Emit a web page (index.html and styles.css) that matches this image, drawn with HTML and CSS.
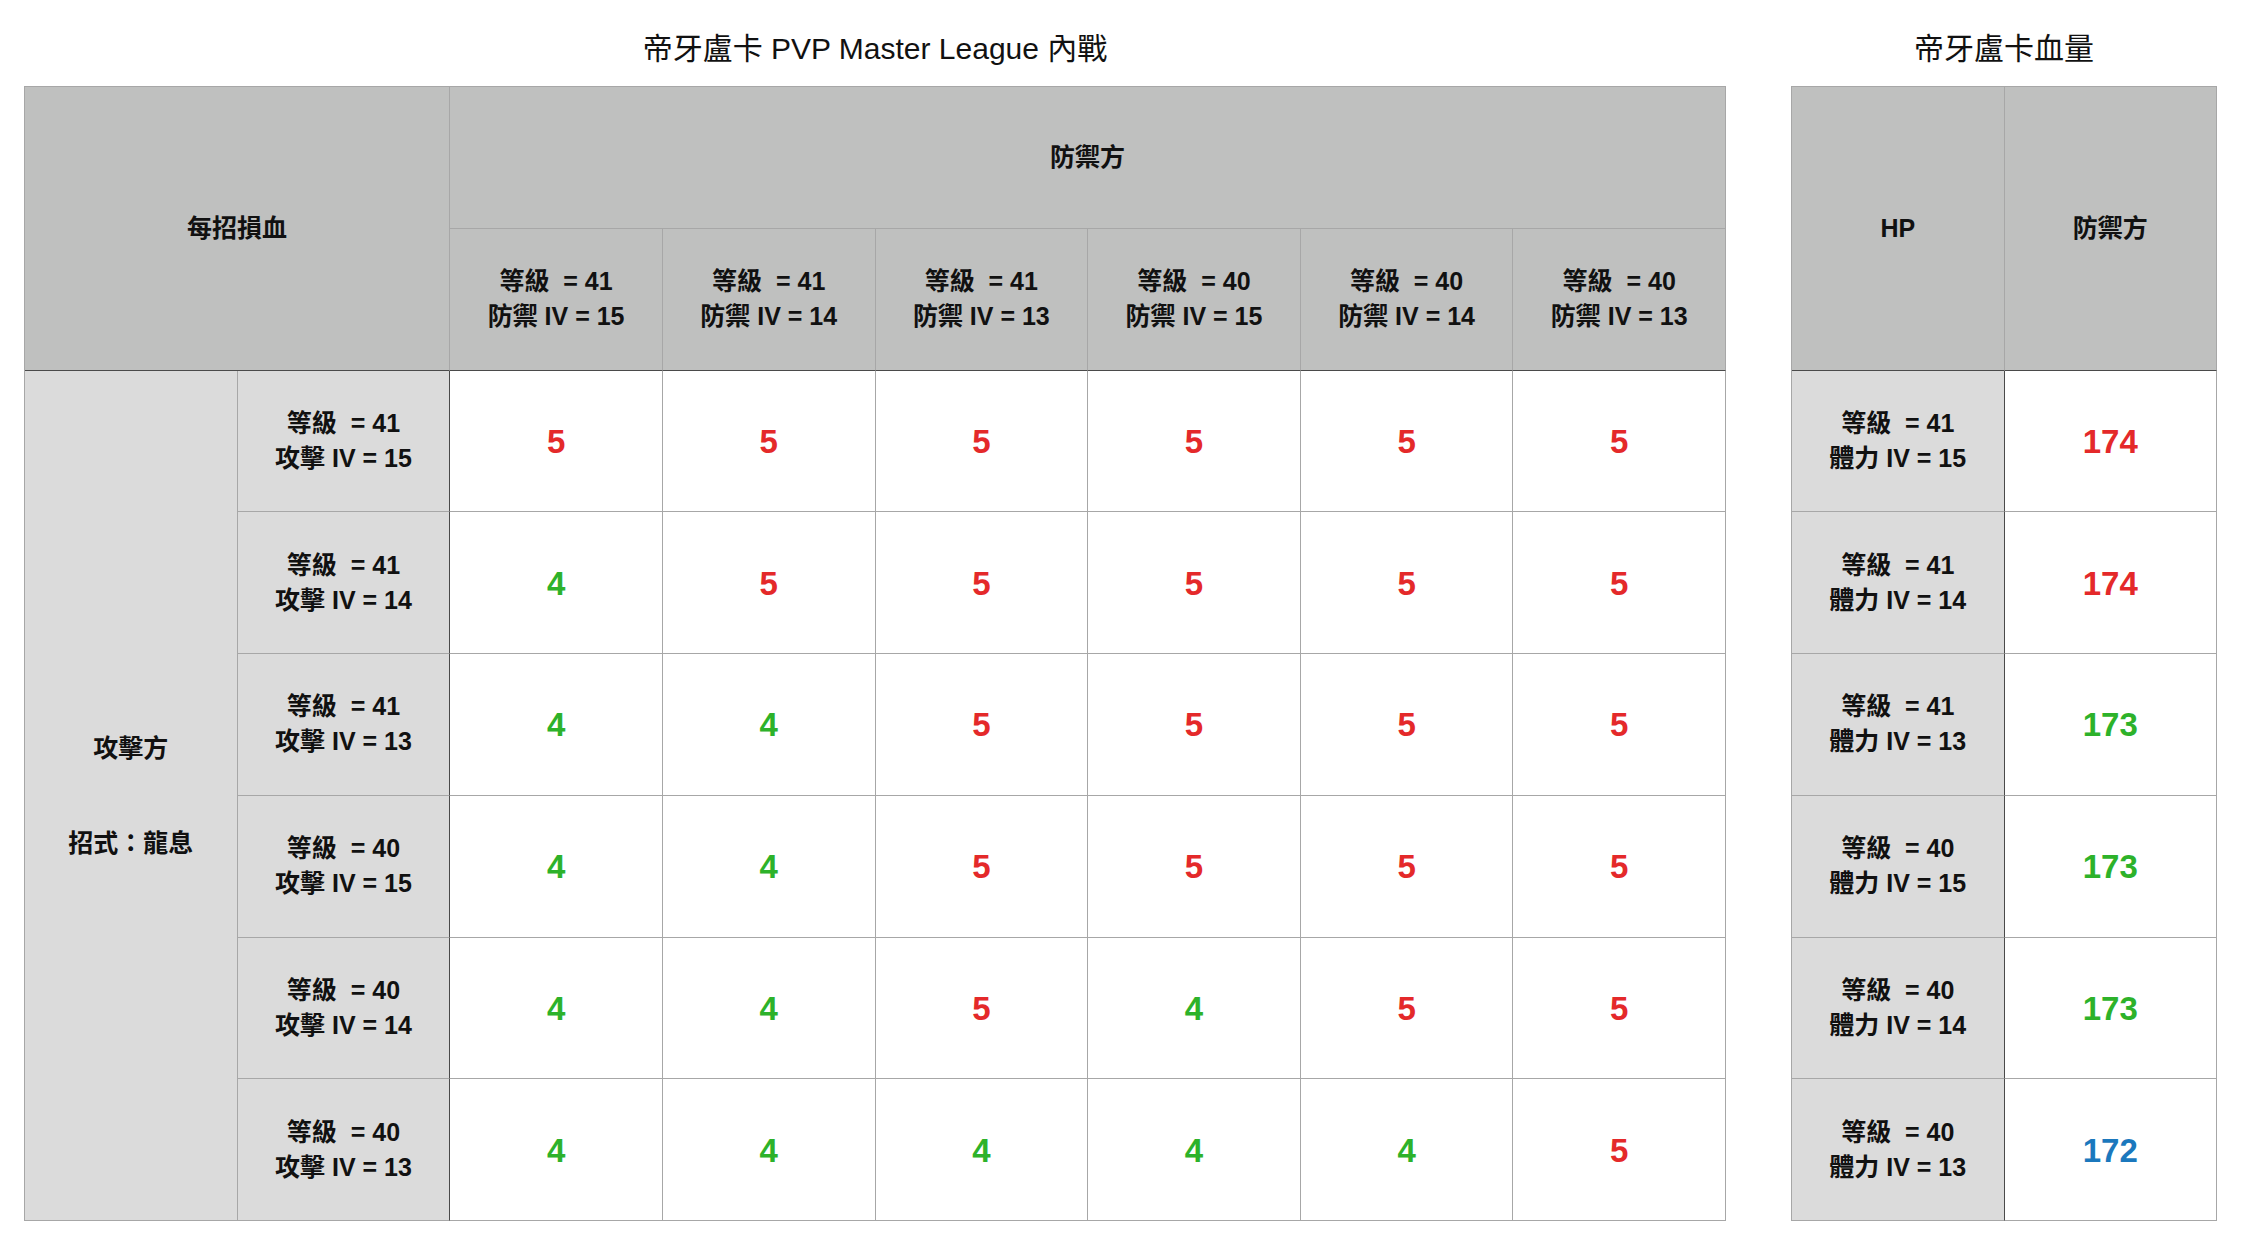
FILE: index.html
```html
<!DOCTYPE html>
<html lang="zh-Hant">
<head>
<meta charset="utf-8">
<title>帝牙盧卡 PVP Master League 內戰</title>
<link rel="stylesheet" href="styles.css">
</head>
<body>
<div class="page">
  <section class="block block-main">
    <h1 class="title">帝牙盧卡 PVP Master League 內戰</h1>
    <div class="grid grid-main">
      <div class="cell head span-c2 span-r2 dark-b">每招損血</div>
      <div class="cell head span-c6">防禦方</div>
      <div class="cell head dark-b">等級&nbsp; = 41<br>防禦 IV = 15</div>
      <div class="cell head dark-b">等級&nbsp; = 41<br>防禦 IV = 14</div>
      <div class="cell head dark-b">等級&nbsp; = 41<br>防禦 IV = 13</div>
      <div class="cell head dark-b">等級&nbsp; = 40<br>防禦 IV = 15</div>
      <div class="cell head dark-b">等級&nbsp; = 40<br>防禦 IV = 14</div>
      <div class="cell head dark-b">等級&nbsp; = 40<br>防禦 IV = 13</div>

      <div class="cell label span-r6 attacker">
        <div>攻擊方</div>
        <div>招式：龍息</div>
      </div>

      <div class="cell label dark-r">等級&nbsp; = 41<br>攻擊 IV = 15</div>
      <div class="cell val red">5</div><div class="cell val red">5</div><div class="cell val red">5</div><div class="cell val red">5</div><div class="cell val red">5</div><div class="cell val red">5</div>

      <div class="cell label dark-r">等級&nbsp; = 41<br>攻擊 IV = 14</div>
      <div class="cell val green">4</div><div class="cell val red">5</div><div class="cell val red">5</div><div class="cell val red">5</div><div class="cell val red">5</div><div class="cell val red">5</div>

      <div class="cell label dark-r">等級&nbsp; = 41<br>攻擊 IV = 13</div>
      <div class="cell val green">4</div><div class="cell val green">4</div><div class="cell val red">5</div><div class="cell val red">5</div><div class="cell val red">5</div><div class="cell val red">5</div>

      <div class="cell label dark-r">等級&nbsp; = 40<br>攻擊 IV = 15</div>
      <div class="cell val green">4</div><div class="cell val green">4</div><div class="cell val red">5</div><div class="cell val red">5</div><div class="cell val red">5</div><div class="cell val red">5</div>

      <div class="cell label dark-r">等級&nbsp; = 40<br>攻擊 IV = 14</div>
      <div class="cell val green">4</div><div class="cell val green">4</div><div class="cell val red">5</div><div class="cell val green">4</div><div class="cell val red">5</div><div class="cell val red">5</div>

      <div class="cell label dark-r">等級&nbsp; = 40<br>攻擊 IV = 13</div>
      <div class="cell val green">4</div><div class="cell val green">4</div><div class="cell val green">4</div><div class="cell val green">4</div><div class="cell val green">4</div><div class="cell val red">5</div>
    </div>
  </section>

  <section class="block block-hp">
    <h1 class="title">帝牙盧卡血量</h1>
    <div class="grid grid-hp">
      <div class="cell head span-r2 dark-b">HP</div>
      <div class="cell head span-r2 dark-b">防禦方</div>

      <div class="cell label dark-r">等級&nbsp; = 41<br>體力 IV = 15</div>
      <div class="cell val red">174</div>
      <div class="cell label dark-r">等級&nbsp; = 41<br>體力 IV = 14</div>
      <div class="cell val red">174</div>
      <div class="cell label dark-r">等級&nbsp; = 41<br>體力 IV = 13</div>
      <div class="cell val green">173</div>
      <div class="cell label dark-r">等級&nbsp; = 40<br>體力 IV = 15</div>
      <div class="cell val green">173</div>
      <div class="cell label dark-r">等級&nbsp; = 40<br>體力 IV = 14</div>
      <div class="cell val green">173</div>
      <div class="cell label dark-r">等級&nbsp; = 40<br>體力 IV = 13</div>
      <div class="cell val blue">172</div>
    </div>
  </section>
</div>
</body>
</html>
```

FILE: styles.css
```css
html, body {
  margin: 0;
  padding: 0;
  background: #ffffff;
}

body {
  font-family: "Liberation Sans", "Noto Sans CJK TC", sans-serif;
  color: #111111;
}

.page {
  display: flex;
  align-items: flex-start;
  gap: 65px;
  padding-left: 24px;
}

.block {
  display: flex;
  flex-direction: column;
}

.title {
  margin: 0;
  box-sizing: border-box;
  height: 86px;
  padding-top: 30px;
  font-size: 30px;
  line-height: 38px;
  font-weight: 400;
  text-align: center;
  color: #111111;
}

.grid {
  display: grid;
  box-sizing: border-box;
  height: 1135px;
  border-top: 1px solid #a7a7a7;
  border-left: 1px solid #a7a7a7;
  grid-template-rows: repeat(8, 1fr);
}

.grid-main {
  width: 1702px;
  grid-template-columns: repeat(8, 1fr);
}

.grid-hp {
  width: 426px;
  grid-template-columns: repeat(2, 1fr);
}

.cell {
  box-sizing: border-box;
  display: flex;
  flex-direction: column;
  align-items: center;
  justify-content: center;
  text-align: center;
  border-right: 1px solid #a7a7a7;
  border-bottom: 1px solid #a7a7a7;
  font-size: 25px;
  line-height: 35px;
  font-weight: 700;
  white-space: nowrap;
}

.head {
  background: #bfc0bf;
}

.label {
  background: #dbdbdb;
}

.val {
  background: #ffffff;
  font-size: 33px;
  line-height: 40px;
  padding-top: 2px;
}

.span-c2 { grid-column: span 2; }
.span-c6 { grid-column: span 6; }
.span-r2 { grid-row: span 2; }
.span-r6 { grid-row: span 6; }

.dark-b { border-bottom-color: #4a4a4a; }
.dark-r { border-right-color: #4a4a4a; }

.attacker {
  gap: 60px;
  padding-top: 2px;
}

.red { color: #e4292a; }
.green { color: #2db22a; }
.blue { color: #1b78bd; }
```
